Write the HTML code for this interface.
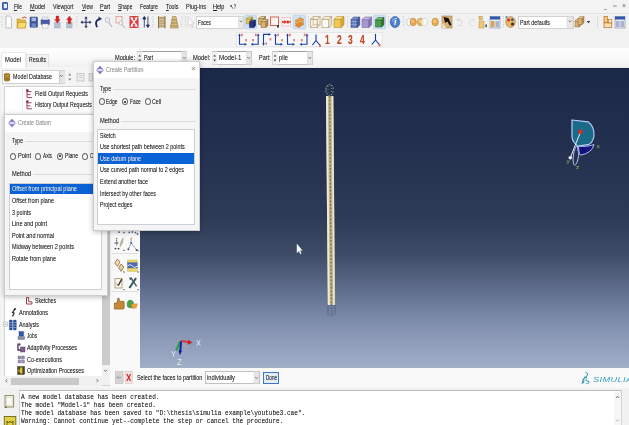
<!DOCTYPE html>
<html><head><meta charset="utf-8"><title>Abaqus/CAE</title>
<style>
*{box-sizing:border-box;margin:0;padding:0}
html,body{width:629px;height:425px;overflow:hidden;background:#f0f0f0;font-family:"Liberation Sans",sans-serif;font-size:6.9px;color:#2a2a2a}
.a{position:absolute}
.t{position:absolute;white-space:nowrap;line-height:8px;font-size:6.9px;transform-origin:0 50%;text-shadow:0 0 0.6px rgba(0,0,0,.35)}
.m{position:absolute;white-space:pre;font-family:"Liberation Mono",monospace;font-size:7.3px;line-height:8px;color:#2a2a2a;text-shadow:0 0 0.6px rgba(0,0,0,.4);transform:scaleX(0.832);transform-origin:0 50%}
.r{position:absolute;width:6px;height:7px;border:0.6px solid #6a6a6a;border-radius:50%;background:#fff}
.r.on::after{content:"";position:absolute;left:1.3px;top:1.6px;width:2px;height:2.4px;border-radius:50%;background:#222}
svg{position:absolute;overflow:visible}

</style></head><body>
<div class="a" style="left:0px;top:0px;width:629px;height:13px;background:#f3f3f3"></div>
<div class="a" style="left:0px;top:13px;width:629px;height:18px;background:#f1f1f1;border-top:1px solid #e2e2e2"></div>
<div class="a" style="left:0px;top:31px;width:629px;height:16.5px;background:#f2f2f2"></div>
<div class="a" style="left:0px;top:47.5px;width:629px;height:20.5px;background:linear-gradient(#fefefe,#fbfbfb 40%,#f1f1f1 92%,#e8e6f0)"></div>
<div class="a" style="left:236px;top:32px;width:147px;height:15px;background:#f7f7f7;border:1px solid #e6e6e6"></div>
<div class="a" style="left:0px;top:67px;width:110px;height:321px;background:#f4f4f4"></div>
<div class="a" style="left:110px;top:67px;width:30px;height:301px;background:#f9f9f9"></div>
<div class="a" style="left:140px;top:68px;width:489px;height:299.5px;background:linear-gradient(#161d38 0,#1b2949 1.5px,#232f4e 25%,#2d3b56 50%,#3d4b67 61.8%,#5f6d8c 73.8%,#8190ae 85.5%,#9aa8c4 97.2%,#a0b0c4 100%)"></div>
<div class="a" style="left:110px;top:367.5px;width:519px;height:20px;background:#f9f9f9"></div>
<div class="a" style="left:0px;top:387.5px;width:629px;height:38px;background:#f1f1f1"></div>
<div class="a" style="left:19px;top:390px;width:602.5px;height:36px;background:#fff;border:1px solid #d4d4d4;border-top-color:#bcbcbc"></div>
<div class="a" style="left:2px;top:2px;width:6px;height:8px;background:#5a78c8;border:1px solid #3858a8;border-radius:1px"></div>
<div class="a" style="left:3.5px;top:4px;width:3px;height:3.5px;background:#e8eefc"></div>
<div class="t" style="left:14.0px;top:2.8px;color:#262626;transform:scaleX(0.719);"><u>F</u>ile</div>
<div class="t" style="left:29.9px;top:2.8px;color:#262626;transform:scaleX(0.815);"><u>M</u>odel</div>
<div class="t" style="left:53.4px;top:2.8px;color:#262626;transform:scaleX(0.764);">View<u>p</u>ort</div>
<div class="t" style="left:82.0px;top:2.8px;color:#262626;transform:scaleX(0.742);"><u>V</u>iew</div>
<div class="t" style="left:100.0px;top:2.8px;color:#262626;transform:scaleX(0.790);"><u>P</u>art</div>
<div class="t" style="left:117.6px;top:2.8px;color:#262626;transform:scaleX(0.722);"><u>S</u>hape</div>
<div class="t" style="left:140.0px;top:2.8px;color:#262626;transform:scaleX(0.757);">Feat<u>u</u>re</div>
<div class="t" style="left:165.6px;top:2.8px;color:#262626;transform:scaleX(0.770);"><u>T</u>ools</div>
<div class="t" style="left:185.6px;top:2.8px;color:#262626;transform:scaleX(0.803);">Plu<u>g</u>-ins</div>
<div class="t" style="left:213.0px;top:2.8px;color:#262626;transform:scaleX(0.804);"><u>H</u>elp</div>
<div class="t" style="left:230.0px;top:2.8px;color:#222;transform:scaleX(0.610);">↖?</div>
<div class="t" style="left:603.5px;top:1.8px;color:#8a8a8a;transform:scaleX(0.780);">_</div>
<div class="t" style="left:612.5px;top:2.3px;color:#8a8a8a;transform:scaleX(1.631);">▫</div>
<div class="t" style="left:622.0px;top:2.3px;color:#8a8a8a;">×</div>
<div class="a" style="left:1px;top:52px;width:24.5px;height:16px;background:#fff;border:1px solid #e8e8e8;border-bottom:none"></div>
<div class="a" style="left:25.5px;top:54px;width:23px;height:13px;background:#f2f2f2;border:1px solid #e2e2e2;border-bottom:none"></div>
<div class="t" style="left:5.0px;top:56.3px;color:#262626;transform:scaleX(0.852);">Model</div>
<div class="t" style="left:29.0px;top:56.4px;color:#262626;transform:scaleX(0.740);">Results</div>
<div class="a" style="left:2px;top:70px;width:63px;height:13.5px;background:#fff;border:1px solid #d2d2d2"></div>
<div class="a" style="left:58.5px;top:71px;width:6px;height:11.5px;background:#e4e4e4;border-left:1px solid #c8c8c8"></div>
<div class="t" style="left:13.0px;top:73.3px;color:#262626;transform:scaleX(0.777);">Model Database</div>
<div class="a" style="left:3.5px;top:86px;width:106.5px;height:300px;background:#fff;border:1px solid #d4d4d4"></div>
<div class="a" style="left:101.5px;top:86.5px;width:8px;height:298.5px;background:#f1f1f1"></div>
<div class="a" style="left:102px;top:93px;width:7.5px;height:272px;background:#cbcbcb"></div>
<div class="a" style="left:4px;top:375.5px;width:97.5px;height:10px;background:#f1f1f1"></div>
<div class="a" style="left:11.3px;top:377.5px;width:68px;height:7px;background:#c9c9c9"></div>
<div class="t" style="left:35.0px;top:89.8px;color:#262626;transform:scaleX(0.773);">Field Output Requests</div>
<div class="t" style="left:35.0px;top:100.9px;color:#262626;transform:scaleX(0.759);">History Output Requests</div>
<div class="t" style="left:35.0px;top:296.8px;color:#262626;transform:scaleX(0.741);">Sketches</div>
<div class="t" style="left:19.0px;top:308.8px;color:#262626;transform:scaleX(0.797);">Annotations</div>
<div class="t" style="left:19.0px;top:320.8px;color:#262626;transform:scaleX(0.779);">Analysis</div>
<div class="t" style="left:27.0px;top:332.3px;color:#262626;transform:scaleX(0.687);">Jobs</div>
<div class="t" style="left:27.0px;top:343.8px;color:#262626;transform:scaleX(0.782);">Adaptivity Processes</div>
<div class="t" style="left:27.0px;top:355.8px;color:#262626;transform:scaleX(0.795);">Co-executions</div>
<div class="t" style="left:27.0px;top:366.8px;color:#262626;transform:scaleX(0.787);">Optimization Processes</div>
<div class="t" style="left:115.0px;top:53.8px;color:#262626;transform:scaleX(0.816);">Module:</div>
<div class="a" style="left:136.7px;top:50.8px;width:50.6px;height:14px;background:#fff;border:1px solid #c4c4c4;border-top-color:#a0a0a0"></div>
<div class="t" style="left:144.3px;top:54.0px;color:#262626;transform:scaleX(0.712);">Part</div>
<div class="t" style="left:192.7px;top:53.8px;color:#262626;transform:scaleX(0.836);">Model:</div>
<div class="a" style="left:211.7px;top:50.8px;width:40px;height:14px;background:#fff;border:1px solid #c4c4c4;border-top-color:#a0a0a0"></div>
<div class="t" style="left:219.3px;top:54.0px;color:#262626;transform:scaleX(0.899);">Model-1</div>
<div class="t" style="left:259.0px;top:53.8px;color:#262626;transform:scaleX(0.790);">Part:</div>
<div class="a" style="left:272px;top:50.8px;width:40.8px;height:14px;background:#fff;border:1px solid #c4c4c4;border-top-color:#a0a0a0"></div>
<div class="t" style="left:278.8px;top:54.0px;color:#262626;transform:scaleX(0.829);">pile</div>
<div class="a" style="left:196px;top:15.5px;width:48px;height:13.5px;background:#fff;border:1px solid #d2d2d2"></div>
<div class="t" style="left:198.0px;top:18.6px;color:#262626;transform:scaleX(0.693);">Faces</div>
<div class="a" style="left:517.5px;top:15.5px;width:56px;height:13.5px;background:#fff;border:1px solid #d2d2d2"></div>
<div class="t" style="left:520.0px;top:18.6px;color:#262626;transform:scaleX(0.775);">Part defaults</div>
<div class="t" style="left:136.6px;top:374.0px;color:#262626;transform:scaleX(0.786);">Select the faces to partition</div>
<div class="a" style="left:205px;top:371px;width:54.5px;height:13px;background:#fff;border:1px solid #c0c0c0"></div>
<div class="t" style="left:207.0px;top:374.0px;color:#262626;transform:scaleX(0.830);">individually</div>
<div class="a" style="left:263px;top:372px;width:16px;height:12px;background:#e4ecf8;border:1px solid #3a78d0"></div>
<div class="t" style="left:265.5px;top:374.1px;color:#202040;transform:scaleX(0.667);">Done</div>
<div class="m" style="left:21px;top:392.8px">A new model database has been created.</div>
<div class="m" style="left:21px;top:400.7px">The model "Model-1" has been created.</div>
<div class="m" style="left:21px;top:408.6px">The model database has been saved to "D:\thesis\simulia example\youtube3.cae".</div>
<div class="m" style="left:21px;top:416.5px">Warning: Cannot continue yet--complete the step or cancel the procedure.</div>
<svg width="629" height="425" viewBox="0 0 629 425" style="left:0;top:0"><rect x="1.5" y="16" width="0.8" height="1" fill="#c4c4c4" stroke="none" stroke-width="0.6" rx="0" opacity="1"/><rect x="1.5" y="18" width="0.8" height="1" fill="#c4c4c4" stroke="none" stroke-width="0.6" rx="0" opacity="1"/><rect x="1.5" y="20" width="0.8" height="1" fill="#c4c4c4" stroke="none" stroke-width="0.6" rx="0" opacity="1"/><rect x="1.5" y="22" width="0.8" height="1" fill="#c4c4c4" stroke="none" stroke-width="0.6" rx="0" opacity="1"/><rect x="1.5" y="24" width="0.8" height="1" fill="#c4c4c4" stroke="none" stroke-width="0.6" rx="0" opacity="1"/><rect x="1.5" y="26" width="0.8" height="1" fill="#c4c4c4" stroke="none" stroke-width="0.6" rx="0" opacity="1"/><path d="M6,16 h3.5 l2,2 v10 h-5.5 z" fill="#fdfdfd" stroke="#9a9a9a" stroke-width="0.6" opacity="1" /><path d="M17,19 h3 l1,1 h4.5 v8 h-8.5 z" fill="#e8b838" stroke="#b08820" stroke-width="0.5" opacity="1" /><path d="M17,28 l1.5,-5.5 h8 l-1.5,5.5 z" fill="#f8dc70" stroke="#b08820" stroke-width="0.5" opacity="1" /><path d="M22,18.5 q2.5,-3 4.5,-0.5" fill="none" stroke="#e04010" stroke-width="1" opacity="1" /><rect x="30" y="17" width="7.5" height="10.3" fill="#3c5498" stroke="#2a3c78" stroke-width="0.5" rx="0.6" opacity="1"/><rect x="31.5" y="17.6" width="4.5" height="3.6" fill="#a8b8dc" stroke="none" stroke-width="0.6" rx="0" opacity="1"/><rect x="31.5" y="23.4" width="4.5" height="3.6" fill="#7088c0" stroke="none" stroke-width="0.6" rx="0" opacity="1"/><rect x="41" y="19.6" width="8.5" height="5" fill="#4c5ca4" stroke="#3c4c8c" stroke-width="0.5" rx="0.6" opacity="1"/><rect x="42.5" y="17" width="5.5" height="2.8" fill="#ececf0" stroke="#a0a8b8" stroke-width="0.4" rx="0" opacity="1"/><rect x="42.5" y="24" width="5.5" height="4" fill="#f8f8fc" stroke="#9098b0" stroke-width="0.4" rx="0" opacity="1"/><rect x="54.5" y="22.5" width="5.6" height="5.5" fill="#b4c0d0" stroke="#94a4b8" stroke-width="0.4" rx="0" opacity="1"/><path d="M56,16 h2.8 v3.6 h1.4 l-2.8,3.6 l-2.8,-3.6 h1.4 z" fill="#d42828" stroke="#a81818" stroke-width="0.3" opacity="1" /><rect x="66.5" y="22.5" width="5.6" height="5.5" fill="#b4c0d0" stroke="#94a4b8" stroke-width="0.4" rx="0" opacity="1"/><path d="M68,23.6 h2.8 v-3.8 h1.4 l-2.8,-3.8 l-2.8,3.8 h1.4 z" fill="#d42828" stroke="#a81818" stroke-width="0.3" opacity="1" /><rect x="76.5" y="16" width="0.8" height="1" fill="#c4c4c4" stroke="none" stroke-width="0.6" rx="0" opacity="1"/><rect x="76.5" y="18" width="0.8" height="1" fill="#c4c4c4" stroke="none" stroke-width="0.6" rx="0" opacity="1"/><rect x="76.5" y="20" width="0.8" height="1" fill="#c4c4c4" stroke="none" stroke-width="0.6" rx="0" opacity="1"/><rect x="76.5" y="22" width="0.8" height="1" fill="#c4c4c4" stroke="none" stroke-width="0.6" rx="0" opacity="1"/><rect x="76.5" y="24" width="0.8" height="1" fill="#c4c4c4" stroke="none" stroke-width="0.6" rx="0" opacity="1"/><rect x="76.5" y="26" width="0.8" height="1" fill="#c4c4c4" stroke="none" stroke-width="0.6" rx="0" opacity="1"/><path d="M86,17.5 v9.4 M81.6,22.2 h8.8" fill="none" stroke="#283468" stroke-width="1.1" opacity="1" /><path d="M86,16.2 l1.7,2.2 h-3.4 z M86,28.2 l1.7,-2.2 h-3.4 z M80.4,22.2 l2.2,-1.7 v3.4 z M91.6,22.2 l-2.2,-1.7 v3.4 z" fill="#283468" stroke="none" stroke-width="0.8" opacity="1" /><path d="M97,27.2 q-3,-6.5 2.6,-8" fill="none" stroke="#1c2860" stroke-width="1.9" opacity="1" /><path d="M98.6,16.6 l3.4,2.4 l-3.6,1.8 z" fill="#1c2860" stroke="none" stroke-width="0.8" opacity="1" /><ellipse cx="107.5" cy="20" rx="2.3" ry="2.6" fill="#ececf0" stroke="#b4b4bc" stroke-width="0.8" opacity="1"/><path d="M109,22.5 l3,4.5" fill="none" stroke="#b8b8bc" stroke-width="1.3" opacity="1" /><rect x="116" y="16.5" width="6" height="6.5" fill="#fbeeee" stroke="#e08880" stroke-width="0.7" rx="0" opacity="1"/><ellipse cx="121" cy="23" rx="1.9" ry="2.2" fill="#f0f0f0" stroke="#b8b0b0" stroke-width="0.7" opacity="1"/><path d="M122.3,25 l2.5,3" fill="none" stroke="#b8b0b0" stroke-width="1.1" opacity="1" /><rect x="129.5" y="16" width="9" height="12" fill="#dc3c3c" stroke="none" stroke-width="0" rx="0.5" opacity="1"/><path d="M130.3,16.8 l3.3,1.2 l-2.1,2.6 z M137.7,16.8 l-3.3,1.2 l2.1,2.6 z M130.3,27.2 l3.3,-1.2 l-2.1,-2.6 z M137.7,27.2 l-3.3,-1.2 l2.1,-2.6 z" fill="#fff" stroke="none" stroke-width="0.8" opacity="1" /><path d="M131.5,18.5 l5,7 M136.5,18.5 l-5,7" fill="none" stroke="#fbe4e4" stroke-width="1.3" opacity="1" /><path d="M144.3,27.5 v-9 M144.3,16.4 l-1.5,2.6 h3 z" fill="#1c2860" stroke="#1c2860" stroke-width="0.8" opacity="1" /><path d="M147.9,16.5 v9 M147.9,27.6 l-1.5,-2.6 h3 z" fill="#1c2860" stroke="#1c2860" stroke-width="0.8" opacity="1" /><rect x="152.5" y="16" width="0.8" height="1" fill="#c4c4c4" stroke="none" stroke-width="0.6" rx="0" opacity="1"/><rect x="152.5" y="18" width="0.8" height="1" fill="#c4c4c4" stroke="none" stroke-width="0.6" rx="0" opacity="1"/><rect x="152.5" y="20" width="0.8" height="1" fill="#c4c4c4" stroke="none" stroke-width="0.6" rx="0" opacity="1"/><rect x="152.5" y="22" width="0.8" height="1" fill="#c4c4c4" stroke="none" stroke-width="0.6" rx="0" opacity="1"/><rect x="152.5" y="24" width="0.8" height="1" fill="#c4c4c4" stroke="none" stroke-width="0.6" rx="0" opacity="1"/><rect x="152.5" y="26" width="0.8" height="1" fill="#c4c4c4" stroke="none" stroke-width="0.6" rx="0" opacity="1"/><rect x="158.5" y="17" width="6.5" height="1.7" fill="#c8a868" stroke="#8c7038" stroke-width="0.3" rx="0" opacity="1"/><rect x="158.5" y="19.8" width="6.5" height="1.7" fill="#c8a868" stroke="#8c7038" stroke-width="0.3" rx="0" opacity="1"/><rect x="158.5" y="22.6" width="6.5" height="1.7" fill="#c8a868" stroke="#8c7038" stroke-width="0.3" rx="0" opacity="1"/><rect x="158.5" y="25.4" width="6.5" height="1.7" fill="#c8a868" stroke="#8c7038" stroke-width="0.3" rx="0" opacity="1"/><path d="M158.5,16 v12.5 M165,16 v12.5" fill="none" stroke="#6c5828" stroke-width="0.7" opacity="1" /><path d="M172.5,16.5 h3.5 l2.3,11.5 h-8 z" fill="#d8bc80" stroke="#8c7038" stroke-width="0.5" opacity="1" /><path d="M171.5,20 h5.5 M171,23 h6.5 M170.5,25.8 h7.5" fill="none" stroke="#8c7038" stroke-width="0.6" opacity="1" /><rect x="181.5" y="16" width="0.8" height="1" fill="#c4c4c4" stroke="none" stroke-width="0.6" rx="0" opacity="1"/><rect x="181.5" y="18" width="0.8" height="1" fill="#c4c4c4" stroke="none" stroke-width="0.6" rx="0" opacity="1"/><rect x="181.5" y="20" width="0.8" height="1" fill="#c4c4c4" stroke="none" stroke-width="0.6" rx="0" opacity="1"/><rect x="181.5" y="22" width="0.8" height="1" fill="#c4c4c4" stroke="none" stroke-width="0.6" rx="0" opacity="1"/><rect x="181.5" y="24" width="0.8" height="1" fill="#c4c4c4" stroke="none" stroke-width="0.6" rx="0" opacity="1"/><rect x="181.5" y="26" width="0.8" height="1" fill="#c4c4c4" stroke="none" stroke-width="0.6" rx="0" opacity="1"/><path d="M188,16.5 v10 l2.2,-2.2 l1.6,3.5 l1.2,-0.6 l-1.6,-3.3 h2.8 z" fill="#fafafa" stroke="#b8b8b8" stroke-width="0.5" opacity="1" /><rect x="185" y="16" width="0.8" height="1" fill="#c4c4c4" stroke="none" stroke-width="0.6" rx="0" opacity="1"/><rect x="185" y="18" width="0.8" height="1" fill="#c4c4c4" stroke="none" stroke-width="0.6" rx="0" opacity="1"/><rect x="185" y="20" width="0.8" height="1" fill="#c4c4c4" stroke="none" stroke-width="0.6" rx="0" opacity="1"/><rect x="185" y="22" width="0.8" height="1" fill="#c4c4c4" stroke="none" stroke-width="0.6" rx="0" opacity="1"/><rect x="185" y="24" width="0.8" height="1" fill="#c4c4c4" stroke="none" stroke-width="0.6" rx="0" opacity="1"/><rect x="185" y="26" width="0.8" height="1" fill="#c4c4c4" stroke="none" stroke-width="0.6" rx="0" opacity="1"/><rect x="238.5" y="16.2" width="5" height="12.2" fill="#e8e8e8" stroke="#c8c8c8" stroke-width="0.4" rx="0" opacity="1"/><path d="M239.7,20.5 l1.3,1.6 l1.3,-1.6" fill="none" stroke="#666" stroke-width="0.7" opacity="1" /><rect x="244.8" y="15.2" width="11.8" height="13.6" fill="#cfe0f4" stroke="#a8c4e4" stroke-width="0.5" rx="0.8" opacity="1"/><path d="M246.5,18.75 h4.32 v5.25 h-4.32 z" fill="#e8c840" stroke="#907818" stroke-width="0.5" opacity="1" /><path d="M246.5,18.75 l1.6800000000000002,-1.75 h4.32 l-1.6800000000000002,1.75 z" fill="#f4e080" stroke="#907818" stroke-width="0.5" opacity="1" /><path d="M250.82,18.75 l1.6800000000000002,-1.75 v5.25 l-1.6800000000000002,1.75 z" fill="#c0a020" stroke="#907818" stroke-width="0.5" opacity="1" /><path d="M249.5,21.875 h4.32 v5.625 h-4.32 z" fill="#283890" stroke="#101850" stroke-width="0.5" opacity="1" /><path d="M249.5,21.875 l1.6800000000000002,-1.875 h4.32 l-1.6800000000000002,1.875 z" fill="#4858b0" stroke="#101850" stroke-width="0.5" opacity="1" /><path d="M253.82,21.875 l1.6800000000000002,-1.875 v5.625 l-1.6800000000000002,1.875 z" fill="#182468" stroke="#101850" stroke-width="0.5" opacity="1" /><path d="M258.5,18.5 h5.04 v6.0 h-5.04 z" fill="#d8b070" stroke="#806028" stroke-width="0.5" opacity="1" /><path d="M258.5,18.5 l1.9600000000000002,-2.0 h5.04 l-1.9600000000000002,2.0 z" fill="#ecd098" stroke="#806028" stroke-width="0.5" opacity="1" /><path d="M263.54,18.5 l1.9600000000000002,-2.0 v6.0 l-1.9600000000000002,2.0 z" fill="#b89050" stroke="#806028" stroke-width="0.5" opacity="1" /><path d="M261,21.5 h5.04 v6.0 h-5.04 z" fill="#d8b070" stroke="#806028" stroke-width="0.5" opacity="1" /><path d="M261,21.5 l1.9600000000000002,-2.0 h5.04 l-1.9600000000000002,2.0 z" fill="#ecd098" stroke="#806028" stroke-width="0.5" opacity="1" /><path d="M266.04,21.5 l1.9600000000000002,-2.0 v6.0 l-1.9600000000000002,2.0 z" fill="#b89050" stroke="#806028" stroke-width="0.5" opacity="1" /><rect x="270.5" y="17" width="8" height="8.5" fill="#fdf4f4" stroke="#d84030" stroke-width="0.8" rx="0" opacity="1"/><rect x="277" y="25" width="2" height="2.5" fill="#404040" stroke="none" stroke-width="0.6" rx="0" opacity="1"/><rect x="282" y="17.5" width="8.5" height="8.5" fill="#fdf6f6" stroke="#e0a098" stroke-width="0.5" rx="0" opacity="1"/><path d="M282,22 h2.5 M290.5,22 h-2.5" fill="none" stroke="#d82818" stroke-width="1.6" opacity="1" /><path d="M284.3,19.8 l2.3,2.2 l-2.3,2.2 z M288.3,19.8 l-2.3,2.2 l2.3,2.2 z" fill="#d82818" stroke="none" stroke-width="0.8" opacity="1" /><rect x="293" y="15.2" width="12.5" height="13.6" fill="#cfe0f4" stroke="#a8c4e4" stroke-width="0.5" rx="0.8" opacity="1"/><path d="M295,21 l5,-3.5 l4,2 l-5,3.5 z" fill="#f0a040" stroke="#a86010" stroke-width="0.4" opacity="1" /><path d="M295,23.2 l5,-3.5 l4,2 l-5,3.5 z" fill="#f4b860" stroke="#a86010" stroke-width="0.4" opacity="1" /><path d="M295,25.4 l5,-3.5 l4,2 l-5,3.5 z" fill="#e88828" stroke="#a86010" stroke-width="0.4" opacity="1" /><rect x="308" y="16" width="0.8" height="1" fill="#c4c4c4" stroke="none" stroke-width="0.6" rx="0" opacity="1"/><rect x="308" y="18" width="0.8" height="1" fill="#c4c4c4" stroke="none" stroke-width="0.6" rx="0" opacity="1"/><rect x="308" y="20" width="0.8" height="1" fill="#c4c4c4" stroke="none" stroke-width="0.6" rx="0" opacity="1"/><rect x="308" y="22" width="0.8" height="1" fill="#c4c4c4" stroke="none" stroke-width="0.6" rx="0" opacity="1"/><rect x="308" y="24" width="0.8" height="1" fill="#c4c4c4" stroke="none" stroke-width="0.6" rx="0" opacity="1"/><rect x="308" y="26" width="0.8" height="1" fill="#c4c4c4" stroke="none" stroke-width="0.6" rx="0" opacity="1"/><path d="M310.5,19.25 h6.84 v8.25 h-6.84 z" fill="#faf6ec" stroke="#a89060" stroke-width="0.6" opacity="1" /><path d="M310.5,19.25 l2.66,-2.75 h6.84 l-2.66,2.75 z" fill="#faf6ec" stroke="#a89060" stroke-width="0.6" opacity="1" /><path d="M317.34,19.25 l2.66,-2.75 v8.25 l-2.66,2.75 z" fill="#faf6ec" stroke="#a89060" stroke-width="0.6" opacity="1" /><path d="M313.2,16.5 v8.3 h6.8 M313.2,24.8 l-2.7,2.7" fill="none" stroke="#a89060" stroke-width="0.5" opacity="1" /><path d="M322,19.25 h6.911999999999999 v8.25 h-6.911999999999999 z" fill="#fcfaf4" stroke="#a89060" stroke-width="0.6" opacity="1" /><path d="M322,19.25 l2.688,-2.75 h6.911999999999999 l-2.688,2.75 z" fill="#f8f2e4" stroke="#a89060" stroke-width="0.6" opacity="1" /><path d="M328.91200000000003,19.25 l2.688,-2.75 v8.25 l-2.688,2.75 z" fill="#f0e8d4" stroke="#a89060" stroke-width="0.6" opacity="1" /><path d="M334,19.25 h7.199999999999999 v8.25 h-7.199999999999999 z" fill="#f0c850" stroke="#a88020" stroke-width="0.5" opacity="1" /><path d="M334,19.25 l2.8000000000000003,-2.75 h7.199999999999999 l-2.8000000000000003,2.75 z" fill="#f8e088" stroke="#a88020" stroke-width="0.5" opacity="1" /><path d="M341.2,19.25 l2.8000000000000003,-2.75 v8.25 l-2.8000000000000003,2.75 z" fill="#d8a830" stroke="#a88020" stroke-width="0.5" opacity="1" /><rect x="347" y="16" width="0.8" height="1" fill="#c4c4c4" stroke="none" stroke-width="0.6" rx="0" opacity="1"/><rect x="347" y="18" width="0.8" height="1" fill="#c4c4c4" stroke="none" stroke-width="0.6" rx="0" opacity="1"/><rect x="347" y="20" width="0.8" height="1" fill="#c4c4c4" stroke="none" stroke-width="0.6" rx="0" opacity="1"/><rect x="347" y="22" width="0.8" height="1" fill="#c4c4c4" stroke="none" stroke-width="0.6" rx="0" opacity="1"/><rect x="347" y="24" width="0.8" height="1" fill="#c4c4c4" stroke="none" stroke-width="0.6" rx="0" opacity="1"/><rect x="347" y="26" width="0.8" height="1" fill="#c4c4c4" stroke="none" stroke-width="0.6" rx="0" opacity="1"/><path d="M351,19.625 h6.336 v7.875 h-6.336 z" fill="#5870b8" stroke="#283c80" stroke-width="0.5" opacity="1" /><path d="M351,19.625 l2.4640000000000004,-2.625 h6.336 l-2.4640000000000004,2.625 z" fill="#7890d0" stroke="#283c80" stroke-width="0.5" opacity="1" /><path d="M357.336,19.625 l2.4640000000000004,-2.625 v7.875 l-2.4640000000000004,2.625 z" fill="#4058a0" stroke="#283c80" stroke-width="0.5" opacity="1" /><path d="M351,21.5 h6.3 M351,24.5 h6.3 M353.2,19.6 v7.9 M355.3,19.6 v7.9" fill="none" stroke="#c0ccec" stroke-width="0.4" opacity="1" /><path d="M362,19.625 h6.911999999999999 v7.875 h-6.911999999999999 z" fill="#a898d0" stroke="#685898" stroke-width="0.5" opacity="1" /><path d="M362,19.625 l2.688,-2.625 h6.911999999999999 l-2.688,2.625 z" fill="#c4b8e4" stroke="#685898" stroke-width="0.5" opacity="1" /><path d="M368.91200000000003,19.625 l2.688,-2.625 v7.875 l-2.688,2.625 z" fill="#8878b8" stroke="#685898" stroke-width="0.5" opacity="1" /><rect x="373.5" y="15.2" width="12" height="13.6" fill="#cfe0f4" stroke="#a8c4e4" stroke-width="0.5" rx="0.8" opacity="1"/><path d="M375.5,19.875 h6.119999999999999 v7.125 h-6.119999999999999 z" fill="#48a048" stroke="#205820" stroke-width="0.5" opacity="1" /><path d="M375.5,19.875 l2.3800000000000003,-2.375 h6.119999999999999 l-2.3800000000000003,2.375 z" fill="#78c070" stroke="#205820" stroke-width="0.5" opacity="1" /><path d="M381.62,19.875 l2.3800000000000003,-2.375 v7.125 l-2.3800000000000003,2.375 z" fill="#307830" stroke="#205820" stroke-width="0.5" opacity="1" /><rect x="388" y="16" width="0.8" height="1" fill="#c4c4c4" stroke="none" stroke-width="0.6" rx="0" opacity="1"/><rect x="388" y="18" width="0.8" height="1" fill="#c4c4c4" stroke="none" stroke-width="0.6" rx="0" opacity="1"/><rect x="388" y="20" width="0.8" height="1" fill="#c4c4c4" stroke="none" stroke-width="0.6" rx="0" opacity="1"/><rect x="388" y="22" width="0.8" height="1" fill="#c4c4c4" stroke="none" stroke-width="0.6" rx="0" opacity="1"/><rect x="388" y="24" width="0.8" height="1" fill="#c4c4c4" stroke="none" stroke-width="0.6" rx="0" opacity="1"/><rect x="388" y="26" width="0.8" height="1" fill="#c4c4c4" stroke="none" stroke-width="0.6" rx="0" opacity="1"/><ellipse cx="395" cy="22" rx="4.8" ry="5.6" fill="#4a80cc" stroke="#2c5cb0" stroke-width="0.6" opacity="1"/><ellipse cx="394" cy="20" rx="2.2" ry="2.2" fill="#88b0e8" stroke="none" stroke-width="0" opacity="0.6"/><rect x="403" y="16" width="0.8" height="1" fill="#c4c4c4" stroke="none" stroke-width="0.6" rx="0" opacity="1"/><rect x="403" y="18" width="0.8" height="1" fill="#c4c4c4" stroke="none" stroke-width="0.6" rx="0" opacity="1"/><rect x="403" y="20" width="0.8" height="1" fill="#c4c4c4" stroke="none" stroke-width="0.6" rx="0" opacity="1"/><rect x="403" y="22" width="0.8" height="1" fill="#c4c4c4" stroke="none" stroke-width="0.6" rx="0" opacity="1"/><rect x="403" y="24" width="0.8" height="1" fill="#c4c4c4" stroke="none" stroke-width="0.6" rx="0" opacity="1"/><rect x="403" y="26" width="0.8" height="1" fill="#c4c4c4" stroke="none" stroke-width="0.6" rx="0" opacity="1"/><ellipse cx="410" cy="22" rx="3.3" ry="3.9" fill="#fdfdfd" stroke="#a8a8a8" stroke-width="0.5" opacity="1"/><ellipse cx="413.2" cy="22" rx="3.2" ry="3.8" fill="#e8a450" stroke="#b87c30" stroke-width="0.5" opacity="1"/><ellipse cx="412.6" cy="21.2" rx="1.5" ry="1.7" fill="#f4c888" stroke="none" stroke-width="0" opacity="0.8"/><ellipse cx="420.6" cy="22" rx="3.2" ry="3.8" fill="#e4b450" stroke="#b08830" stroke-width="0.5" opacity="1"/><ellipse cx="424.2" cy="22" rx="3.3" ry="3.9" fill="#fdfdfd" stroke="#a8a8a8" stroke-width="0.5" opacity="0.8"/><ellipse cx="420" cy="21.2" rx="1.4" ry="1.6" fill="#f4d890" stroke="none" stroke-width="0" opacity="0.8"/><ellipse cx="435.2" cy="22" rx="3.3" ry="3.9" fill="#e8ac50" stroke="#b88430" stroke-width="0.5" opacity="1"/><ellipse cx="434.6" cy="21.2" rx="1.5" ry="1.7" fill="#f6d090" stroke="none" stroke-width="0" opacity="0.8"/><rect x="442" y="16" width="10" height="12" fill="#d8b478" stroke="#8c6c30" stroke-width="0.5" rx="0" opacity="1"/><path d="M442.3,23 l4,5 h-4 z" fill="#f4ead0" stroke="none" stroke-width="0.8" opacity="1" /><path d="M443.5,17 l5,1 l3,7 l-1.8,0.8 l-2.2,-4.4 l-2.3,1.5 z" fill="#181008" stroke="none" stroke-width="0.8" opacity="1" /><path d="M457,25.5 q5,1 5,-3.5 q-1,-3.2 -4.2,-2.6" fill="none" stroke="#dcdcdc" stroke-width="1.1" opacity="1" /><path d="M456,19.8 l3,-2 v4 z" fill="#dcdcdc" stroke="none" stroke-width="0.8" opacity="1" /><path d="M474.5,25.5 q-5,1 -5,-3.5 q1,-3.2 4.2,-2.6" fill="none" stroke="#e2e2e2" stroke-width="1.1" opacity="1" /><path d="M475.6,19.8 l-3,-2 v4 z" fill="#e2e2e2" stroke="none" stroke-width="0.8" opacity="1" /><rect x="479" y="16.5" width="3.2" height="3.2" fill="#e8c070" stroke="#a07828" stroke-width="0.4" rx="0" opacity="1"/><rect x="479" y="21" width="5" height="7" fill="#ecc878" stroke="#a07828" stroke-width="0.4" rx="0" opacity="1"/><rect x="485.3" y="24.5" width="1.6" height="2.6" fill="#505050" stroke="none" stroke-width="0.6" rx="0" opacity="1"/><rect x="490" y="16.5" width="10" height="11.5" fill="#e8ecf4" stroke="#6878a0" stroke-width="0.5" rx="0" opacity="1"/><rect x="490" y="16.5" width="10" height="3" fill="#3058a8" stroke="none" stroke-width="0.6" rx="0" opacity="1"/><rect x="491" y="21" width="3.5" height="6" fill="#d8a848" stroke="none" stroke-width="0.6" rx="0" opacity="1"/><rect x="495.5" y="21" width="3.5" height="6" fill="#a8b4cc" stroke="none" stroke-width="0.6" rx="0" opacity="1"/><rect x="503" y="16" width="0.8" height="1" fill="#c4c4c4" stroke="none" stroke-width="0.6" rx="0" opacity="1"/><rect x="503" y="18" width="0.8" height="1" fill="#c4c4c4" stroke="none" stroke-width="0.6" rx="0" opacity="1"/><rect x="503" y="20" width="0.8" height="1" fill="#c4c4c4" stroke="none" stroke-width="0.6" rx="0" opacity="1"/><rect x="503" y="22" width="0.8" height="1" fill="#c4c4c4" stroke="none" stroke-width="0.6" rx="0" opacity="1"/><rect x="503" y="24" width="0.8" height="1" fill="#c4c4c4" stroke="none" stroke-width="0.6" rx="0" opacity="1"/><rect x="503" y="26" width="0.8" height="1" fill="#c4c4c4" stroke="none" stroke-width="0.6" rx="0" opacity="1"/><ellipse cx="510.5" cy="22" rx="4.8" ry="5.4" fill="#e8b868" stroke="#906428" stroke-width="0.5" opacity="1"/><ellipse cx="508.6" cy="20" rx="1.5" ry="1.5" fill="#d03020" stroke="none" stroke-width="0.6" opacity="1"/><ellipse cx="512.3" cy="19.8" rx="1.3" ry="1.3" fill="#304898" stroke="none" stroke-width="0.6" opacity="1"/><ellipse cx="512.5" cy="24" rx="1.6" ry="1.6" fill="#403020" stroke="none" stroke-width="0.6" opacity="1"/><rect x="505.5" y="16" width="2" height="2.4" fill="#8090b0" stroke="none" stroke-width="0.6" rx="0" opacity="1"/><rect x="567" y="16.2" width="6" height="12.2" fill="#e8e8e8" stroke="#c8c8c8" stroke-width="0.4" rx="0" opacity="1"/><path d="M568.7,20.5 l1.3,1.6 l1.3,-1.6" fill="none" stroke="#666" stroke-width="0.7" opacity="1" /><path d="M575,21.0 h4.32 v6.0 h-4.32 z" fill="#d8b070" stroke="#806028" stroke-width="0.4" opacity="1" /><path d="M575,21.0 l1.6800000000000002,-2.0 h4.32 l-1.6800000000000002,2.0 z" fill="#ecd098" stroke="#806028" stroke-width="0.4" opacity="1" /><path d="M579.32,21.0 l1.6800000000000002,-2.0 v6.0 l-1.6800000000000002,2.0 z" fill="#b89050" stroke="#806028" stroke-width="0.4" opacity="1" /><path d="M578,18.5 h4.32 v6.0 h-4.32 z" fill="#d8b070" stroke="#806028" stroke-width="0.4" opacity="1" /><path d="M578,18.5 l1.6800000000000002,-2.0 h4.32 l-1.6800000000000002,2.0 z" fill="#ecd098" stroke="#806028" stroke-width="0.4" opacity="1" /><path d="M582.32,18.5 l1.6800000000000002,-2.0 v6.0 l-1.6800000000000002,2.0 z" fill="#b89050" stroke="#806028" stroke-width="0.4" opacity="1" /><path d="M586.8,21 h3.4 l-1.7,2.2 z" fill="#282828" stroke="none" stroke-width="0.8" opacity="1" /><rect x="597" y="16" width="0.8" height="1" fill="#c4c4c4" stroke="none" stroke-width="0.6" rx="0" opacity="1"/><rect x="597" y="18" width="0.8" height="1" fill="#c4c4c4" stroke="none" stroke-width="0.6" rx="0" opacity="1"/><rect x="597" y="20" width="0.8" height="1" fill="#c4c4c4" stroke="none" stroke-width="0.6" rx="0" opacity="1"/><rect x="597" y="22" width="0.8" height="1" fill="#c4c4c4" stroke="none" stroke-width="0.6" rx="0" opacity="1"/><rect x="597" y="24" width="0.8" height="1" fill="#c4c4c4" stroke="none" stroke-width="0.6" rx="0" opacity="1"/><rect x="597" y="26" width="0.8" height="1" fill="#c4c4c4" stroke="none" stroke-width="0.6" rx="0" opacity="1"/><rect x="604" y="16.5" width="3.4" height="6.4" fill="#f0c888" stroke="#b86c20" stroke-width="0.7" rx="0" opacity="1"/><rect x="604" y="22.9" width="7.8" height="4.8" fill="#f8deb0" stroke="#b86c20" stroke-width="0.7" rx="0" opacity="1"/><rect x="608.6" y="19.5" width="3.2" height="3.4" fill="#fbeacc" stroke="#b86c20" stroke-width="0.6" rx="0" opacity="1"/><rect x="615" y="16.5" width="10" height="11.5" fill="#e8ecf4" stroke="#6878a0" stroke-width="0.5" rx="0" opacity="1"/><rect x="615" y="16.5" width="10" height="3" fill="#3058a8" stroke="none" stroke-width="0.6" rx="0" opacity="1"/><rect x="616" y="21" width="3.5" height="6" fill="#a8b4cc" stroke="none" stroke-width="0.6" rx="0" opacity="1"/><rect x="620.5" y="21" width="3.5" height="6" fill="#a8b4cc" stroke="none" stroke-width="0.6" rx="0" opacity="1"/><path d="M239.5,35 V44.3 H245.6" fill="none" stroke="#1c3ca8" stroke-width="1.1" opacity="1" /><path d="M239.5,33.4 l-1.4,2.4 h2.8 z M247.0,44.3 l-2.4,-1.4 v2.8 z" fill="#1c3ca8" stroke="none" stroke-width="0.8" opacity="1" /><rect x="241.2" y="33.6" width="1.7" height="2.6" fill="#d85838" stroke="none" stroke-width="0.6" rx="0" opacity="0.75"/><rect x="245.2" y="39" width="1.7" height="2.4" fill="#d85838" stroke="none" stroke-width="0.6" rx="0" opacity="0.75"/><path d="M258.2,35 V44.3 H252.1" fill="none" stroke="#1c3ca8" stroke-width="1.1" opacity="1" /><path d="M258.2,33.4 l-1.4,2.4 h2.8 z M250.7,44.3 l2.4,-1.4 v2.8 z" fill="#1c3ca8" stroke="none" stroke-width="0.8" opacity="1" /><rect x="255.0" y="33.6" width="1.7" height="2.6" fill="#d85838" stroke="none" stroke-width="0.6" rx="0" opacity="0.75"/><rect x="252.2" y="39" width="1.7" height="2.4" fill="#d85838" stroke="none" stroke-width="0.6" rx="0" opacity="0.75"/><path d="M263.5,44 V34.4 H269.6" fill="none" stroke="#1c3ca8" stroke-width="1.1" opacity="1" /><path d="M263.5,45.8 l-1.4,-2.4 h2.8 z M271.0,34.4 l-2.4,-1.4 v2.8 z" fill="#1c3ca8" stroke="none" stroke-width="0.8" opacity="1" /><rect x="265.40000000000003" y="42.4" width="1.7" height="2.4" fill="#d85838" stroke="none" stroke-width="0.6" rx="0" opacity="0.75"/><rect x="269.6" y="38" width="1.7" height="2.4" fill="#d85838" stroke="none" stroke-width="0.6" rx="0" opacity="0.75"/><path d="M275.5,35 V44.3 H281.6" fill="none" stroke="#1c3ca8" stroke-width="1.1" opacity="1" /><path d="M275.5,33.4 l-1.4,2.4 h2.8 z M283.0,44.3 l-2.4,-1.4 v2.8 z" fill="#1c3ca8" stroke="none" stroke-width="0.8" opacity="1" /><rect x="277.20000000000005" y="33.6" width="1.7" height="2.6" fill="#d85838" stroke="none" stroke-width="0.6" rx="0" opacity="0.75"/><rect x="281.20000000000005" y="39" width="1.7" height="2.4" fill="#d85838" stroke="none" stroke-width="0.6" rx="0" opacity="0.75"/><path d="M287.5,35 V44.3 H293.6" fill="none" stroke="#1c3ca8" stroke-width="1.1" opacity="1" /><path d="M287.5,33.4 l-1.4,2.4 h2.8 z M295.0,44.3 l-2.4,-1.4 v2.8 z" fill="#1c3ca8" stroke="none" stroke-width="0.8" opacity="1" /><rect x="289.20000000000005" y="33.6" width="1.7" height="2.6" fill="#d85838" stroke="none" stroke-width="0.6" rx="0" opacity="0.75"/><rect x="293.20000000000005" y="39" width="1.7" height="2.4" fill="#d85838" stroke="none" stroke-width="0.6" rx="0" opacity="0.75"/><path d="M307.0,35 V44.3 H300.9" fill="none" stroke="#1c3ca8" stroke-width="1.1" opacity="1" /><path d="M307.0,33.4 l-1.4,2.4 h2.8 z M299.5,44.3 l2.4,-1.4 v2.8 z" fill="#1c3ca8" stroke="none" stroke-width="0.8" opacity="1" /><rect x="303.79999999999995" y="33.6" width="1.7" height="2.6" fill="#d85838" stroke="none" stroke-width="0.6" rx="0" opacity="0.75"/><rect x="301.0" y="39" width="1.7" height="2.4" fill="#d85838" stroke="none" stroke-width="0.6" rx="0" opacity="0.75"/><path d="M316,34.5 v6 l-3.6,4.5 M316,40.5 l3.8,4.5" fill="none" stroke="#1838a0" stroke-width="1.1" opacity="1" /><rect x="319" y="44.7" width="2" height="2" fill="#d04030" stroke="none" stroke-width="0.6" rx="0" opacity="0.8"/><path d="M375.5,34 v6 l-3.6,4.5 M375.5,40 l3.8,4.5" fill="none" stroke="#1838a0" stroke-width="1.1" opacity="1" /><rect x="378.5" y="44.2" width="2" height="2" fill="#d04030" stroke="none" stroke-width="0.6" rx="0" opacity="0.8"/><rect x="137.2" y="51.5" width="5" height="13" fill="#f0f0f0" stroke="none" stroke-width="0.6" rx="0" opacity="1"/><path d="M138.29999999999998,56.6 l1.4,-1.8 l1.4,1.8 z M138.29999999999998,59.6 l1.4,1.8 l1.4,-1.8 z" fill="#444" stroke="none" stroke-width="0.8" opacity="1" /><rect x="181.8" y="51.5" width="5" height="13" fill="#e6e6e6" stroke="#cfcfcf" stroke-width="0.4" rx="0" opacity="1"/><path d="M182.9,57 l1.4,1.7 l1.4,-1.7" fill="none" stroke="#666" stroke-width="0.7" opacity="1" /><rect x="212.2" y="51.5" width="5" height="13" fill="#f0f0f0" stroke="none" stroke-width="0.6" rx="0" opacity="1"/><path d="M213.29999999999998,56.6 l1.4,-1.8 l1.4,1.8 z M213.29999999999998,59.6 l1.4,1.8 l1.4,-1.8 z" fill="#444" stroke="none" stroke-width="0.8" opacity="1" /><rect x="246.2" y="51.5" width="5" height="13" fill="#e6e6e6" stroke="#cfcfcf" stroke-width="0.4" rx="0" opacity="1"/><path d="M247.29999999999998,57 l1.4,1.7 l1.4,-1.7" fill="none" stroke="#666" stroke-width="0.7" opacity="1" /><rect x="272.5" y="51.5" width="5" height="13" fill="#f0f0f0" stroke="none" stroke-width="0.6" rx="0" opacity="1"/><path d="M273.6,56.6 l1.4,-1.8 l1.4,1.8 z M273.6,59.6 l1.4,1.8 l1.4,-1.8 z" fill="#444" stroke="none" stroke-width="0.8" opacity="1" /><rect x="307.3" y="51.5" width="5" height="13" fill="#e6e6e6" stroke="#cfcfcf" stroke-width="0.4" rx="0" opacity="1"/><path d="M308.40000000000003,57 l1.4,1.7 l1.4,-1.7" fill="none" stroke="#666" stroke-width="0.7" opacity="1" /><rect x="254.0" y="371.5" width="5" height="12" fill="#e6e6e6" stroke="#cfcfcf" stroke-width="0.4" rx="0" opacity="1"/><path d="M255.1,377 l1.4,1.7 l1.4,-1.7" fill="none" stroke="#666" stroke-width="0.7" opacity="1" /><path d="M60,75 l1.4,1.7 l1.4,-1.7" fill="none" stroke="#666" stroke-width="0.7" opacity="1" /><ellipse cx="7" cy="74.5" rx="2.8" ry="1.2" fill="#c89838" stroke="#705010" stroke-width="0.4" opacity="1"/><rect x="4.2" y="74.5" width="5.6" height="5.5" fill="#c89838" stroke="#705010" stroke-width="0.4" rx="0" opacity="1"/><ellipse cx="7" cy="80" rx="2.8" ry="1.2" fill="#b88828" stroke="#705010" stroke-width="0.4" opacity="1"/><path d="M4.2,76.5 q2.8,1.4 5.6,0 M4.2,78.4 q2.8,1.4 5.6,0" fill="none" stroke="#604008" stroke-width="0.4" opacity="1" /><path d="M68.2,75.5 l1.6,-2.3 l1.6,2.3 z M68.2,78.5 l1.6,2.3 l1.6,-2.3 z" fill="#888" stroke="none" stroke-width="0.8" opacity="1" /><rect x="77" y="73.5" width="7" height="7.5" fill="#ececec" stroke="#b4b4b4" stroke-width="0.6" rx="0" opacity="1"/><path d="M79,75.5 h3 M79,77.5 h3" fill="none" stroke="#b4b4b4" stroke-width="0.5" opacity="1" /><rect x="89" y="73.5" width="3.6" height="7.5" fill="#e4e4e4" stroke="#b4b4b4" stroke-width="0.6" rx="0" opacity="1"/><path d="M27,89.6 v8 M27,91.6 h4.5 M27,94.6 h3.5 M27,97.6 h5" fill="none" stroke="#a02848" stroke-width="0.9" opacity="1" /><rect x="26.2" y="89.3" width="2.3" height="2.3" fill="#783050" stroke="none" stroke-width="0.6" rx="0" opacity="1"/><path d="M27,100.8 v8 M27,102.8 h4.5 M27,105.8 h3.5 M27,108.8 h5" fill="none" stroke="#a02848" stroke-width="0.9" opacity="1" /><rect x="26.2" y="100.5" width="2.3" height="2.3" fill="#783050" stroke="none" stroke-width="0.6" rx="0" opacity="1"/><path d="M22.5,87 v26" fill="none" stroke="#dcdcdc" stroke-width="0.5" opacity="1" /><path d="M26.5,297.5 v6.5 h5.5 M26.5,297.5 h2.2 v4.3 h3.3 v2.2" fill="none" stroke="#903040" stroke-width="0.9" opacity="1" /><path d="M15.5,308.5 l-3,4 l1.6,0.5 l-1.6,3.5" fill="none" stroke="#181818" stroke-width="1.1" opacity="1" /><path d="M15.8,308 l-2.6,1 l1.8,1.6 z" fill="#181818" stroke="none" stroke-width="0.8" opacity="1" /><rect x="3.4" y="322" width="4" height="4.6" fill="#fafafa" stroke="#a0a0a0" stroke-width="0.5" rx="0" opacity="1"/><path d="M4.3,324.3 h2.2" fill="none" stroke="#555" stroke-width="0.5" opacity="1" /><rect x="9.3" y="320" width="3" height="10" fill="#2850a0" stroke="#183070" stroke-width="0.3" rx="0.8" opacity="1"/><path d="M9.3,322.5 h3 M9.3,325 h3 M9.3,327.5 h3" fill="none" stroke="#c0d0f0" stroke-width="0.5" opacity="1" /><rect x="13.3" y="320" width="3" height="10" fill="#2850a0" stroke="#183070" stroke-width="0.3" rx="0.8" opacity="1"/><path d="M13.3,322.5 h3 M13.3,325 h3 M13.3,327.5 h3" fill="none" stroke="#c0d0f0" stroke-width="0.5" opacity="1" /><rect x="19" y="331.5" width="4.6" height="4.5" fill="#3858b0" stroke="#203880" stroke-width="0.4" rx="0" opacity="1"/><rect x="18" y="336.5" width="6.6" height="3" fill="#8890a8" stroke="#586078" stroke-width="0.4" rx="0" opacity="1"/><path d="M21.3,336 v1" fill="none" stroke="#586078" stroke-width="0.6" opacity="1" /><path d="M18,343.5 v6.5 h3" fill="none" stroke="#483060" stroke-width="1.3" opacity="1" /><rect x="20.5" y="347" width="4.5" height="5" fill="#806088" stroke="#483060" stroke-width="0.4" rx="0" opacity="1"/><ellipse cx="19.3" cy="344.5" rx="1.3" ry="1.3" fill="#604878" stroke="none" stroke-width="0.6" opacity="1"/><rect x="18" y="356" width="2.8" height="3" fill="#9088b0" stroke="#605880" stroke-width="0.3" rx="0" opacity="1"/><rect x="21.6" y="356" width="2.8" height="3" fill="#9088b0" stroke="#605880" stroke-width="0.3" rx="0" opacity="1"/><rect x="18" y="360" width="2.8" height="3" fill="#a098b8" stroke="#605880" stroke-width="0.3" rx="0" opacity="1"/><rect x="21.6" y="360" width="2.8" height="3" fill="#a098b8" stroke="#605880" stroke-width="0.3" rx="0" opacity="1"/><rect x="17.6" y="366.5" width="7" height="8" fill="#4c4420" stroke="#2c2810" stroke-width="0.4" rx="0" opacity="1"/><rect x="20" y="367.5" width="2.4" height="6" fill="#d8c040" stroke="none" stroke-width="0.6" rx="0" opacity="1"/><rect x="18.3" y="369.5" width="1.4" height="2.5" fill="#c8a030" stroke="none" stroke-width="0.6" rx="0" opacity="1"/><path d="M104,369.8 l1.5,1.7 l1.5,-1.7" fill="none" stroke="#555" stroke-width="0.8" opacity="1" /><path d="M7.3,379 l-1.6,1.6 l1.6,1.6" fill="none" stroke="#555" stroke-width="0.8" opacity="1" /><path d="M96.5,379 l1.6,1.6 l-1.6,1.6" fill="none" stroke="#555" stroke-width="0.8" opacity="1" /><path d="M112,253.5 h26 M112,291.5 h26" fill="none" stroke="#cdcdcd" stroke-width="0.6" opacity="1" /><path d="M116.7,238 v7.5 M114.5,243 h4.6" fill="none" stroke="#3a3a48" stroke-width="1" opacity="1" stroke-dasharray="1.4 0.8"/><ellipse cx="115.5" cy="248.6" rx="0.9" ry="0.9" fill="#3a3a48" stroke="none" stroke-width="0.6" opacity="1"/><ellipse cx="118.6" cy="248.6" rx="0.9" ry="0.9" fill="#3a3a48" stroke="none" stroke-width="0.6" opacity="1"/><ellipse cx="124" cy="250.4" rx="0.7" ry="0.7" fill="#3a3a48" stroke="none" stroke-width="0.6" opacity="1"/><ellipse cx="138" cy="250.6" rx="0.7" ry="0.7" fill="#3a3a48" stroke="none" stroke-width="0.6" opacity="1"/><path d="M120,247 q-0.5,-5 3.2,-9.5 q0.8,5.5 -3.2,9.5 z" fill="#b4c4a0" stroke="#90a480" stroke-width="0.3" opacity="1" /><path d="M131.2,239.5 v3.5 l-2.6,5.6 M131.2,243 l5,6.4" fill="none" stroke="#586088" stroke-width="0.9" opacity="1" stroke-dasharray="1.2 0.8"/><ellipse cx="131.2" cy="238.4" rx="1" ry="1" fill="#e0a890" stroke="none" stroke-width="0.6" opacity="1"/><ellipse cx="131.2" cy="243" rx="1" ry="1" fill="#4860b0" stroke="none" stroke-width="0.6" opacity="1"/><ellipse cx="128.4" cy="249.2" rx="1" ry="1" fill="#3c4878" stroke="none" stroke-width="0.6" opacity="1"/><ellipse cx="136.6" cy="250" rx="1" ry="1" fill="#3c4878" stroke="none" stroke-width="0.6" opacity="1"/><ellipse cx="124" cy="232.6" rx="0.9" ry="0.9" fill="#3c4468" stroke="none" stroke-width="0.6" opacity="0.8"/><ellipse cx="129.2" cy="232.4" rx="0.9" ry="0.9" fill="#3c4468" stroke="none" stroke-width="0.6" opacity="0.8"/><ellipse cx="132.3" cy="232" rx="0.9" ry="0.9" fill="#3c4468" stroke="none" stroke-width="0.6" opacity="0.8"/><ellipse cx="135.4" cy="232.6" rx="0.9" ry="0.9" fill="#3c4468" stroke="none" stroke-width="0.6" opacity="0.8"/><ellipse cx="137.5" cy="234" rx="0.9" ry="0.9" fill="#3c4468" stroke="none" stroke-width="0.6" opacity="0.8"/><ellipse cx="119" cy="232.2" rx="0.9" ry="0.9" fill="#3c4468" stroke="none" stroke-width="0.6" opacity="0.8"/><path d="M114.8,263 l2.6,-4 l2.6,3 l-2.6,4.4 z" fill="#f0dcb0" stroke="#8c6c38" stroke-width="0.8" opacity="1" /><path d="M118.6,268 l2.6,-4 l2.6,3 l-2.6,4.4 z" fill="#e8cc98" stroke="#8c6c38" stroke-width="0.8" opacity="1" /><rect x="127.5" y="260" width="9.8" height="2.8" fill="#e8d468" stroke="#b0a030" stroke-width="0.3" rx="0" opacity="1"/><rect x="127.5" y="262.8" width="9.8" height="5.4" fill="#4c68b8" stroke="#304890" stroke-width="0.3" rx="0" opacity="1"/><rect x="127.5" y="268.2" width="9.8" height="3.2" fill="#e8d468" stroke="#b0a030" stroke-width="0.3" rx="0" opacity="1"/><path d="M127.5,266 q2.4,-3 4.9,0 t4.9,0" fill="none" stroke="#f0f4ff" stroke-width="0.9" opacity="1" /><rect x="115" y="278.6" width="7" height="9.4" fill="#fbf8f0" stroke="#b09870" stroke-width="0.9" rx="0" opacity="1"/><path d="M117.6,285.2 l3.6,-6.4 l1.2,0.7 l-3.6,6.4 z" fill="#383838" stroke="none" stroke-width="0.8" opacity="1" /><path d="M116.6,283.5 l1.6,2.4" fill="none" stroke="#605030" stroke-width="0.7" opacity="1" /><path d="M136,278 l-6.6,10" fill="none" stroke="#3c5860" stroke-width="2.1" opacity="1" /><path d="M131,278 l5.6,8.4" fill="none" stroke="#48646c" stroke-width="1.5" opacity="1" /><ellipse cx="130.6" cy="278.6" rx="1.3" ry="1.3" fill="#48646c" stroke="none" stroke-width="0.6" opacity="1"/><ellipse cx="124" cy="289.6" rx="0.7" ry="0.7" fill="#3a3a48" stroke="none" stroke-width="0.6" opacity="1"/><ellipse cx="124" cy="272" rx="0.7" ry="0.7" fill="#3a3a48" stroke="none" stroke-width="0.6" opacity="1"/><ellipse cx="138" cy="289.6" rx="0.7" ry="0.7" fill="#3a3a48" stroke="none" stroke-width="0.6" opacity="1"/><ellipse cx="138" cy="272" rx="0.7" ry="0.7" fill="#3a3a48" stroke="none" stroke-width="0.6" opacity="1"/><path d="M114.4,303 h3 v-3.5 q0,-1.6 1.6,-1.4 l0.6,3.2 h4 q1,0.4 0.6,1.6 v5 q-0.4,1.2 -1.6,1.2 h-8.2 z" fill="#c48838" stroke="#80501c" stroke-width="0.6" opacity="1" /><path d="M127.2,303 q0.6,-3.4 4,-2.8 q2.4,0.8 2.4,3.2 l-2,4.4 q-3,0.6 -4.4,-1.6 z" fill="#4ca048" stroke="#2c7428" stroke-width="0.4" opacity="1" /><path d="M131.4,304.2 l6,-0.4 l-1.2,4.2 l-4,0.6 z" fill="#f0a438" stroke="#c07818" stroke-width="0.4" opacity="1" /><rect x="115.3" y="371.5" width="7.8" height="12" fill="#d4d4d4" stroke="#b8b8b8" stroke-width="0.5" rx="0" opacity="1"/><path d="M121.5,377.5 h-4.5 m1.8,-1.8 l-1.8,1.8 l1.8,1.8" fill="none" stroke="#a0a0a0" stroke-width="0.9" opacity="1" /><rect x="125.2" y="371.5" width="7" height="12" fill="#f4e4e4" stroke="#d8b8b8" stroke-width="0.5" rx="0" opacity="1"/><path d="M126.8,374 l3.8,7 M130.6,374 l-3.8,7" fill="none" stroke="#d82028" stroke-width="1.2" opacity="1" /><path d="M585.5,372 q3.5,1 1.5,4 q-1.6,1.6 -3,1.2 M587,377.5 q-3.5,-0.6 -4.2,3 l-0.8,3.5 M586.2,378.5 q-0.8,3 2.5,2.6 q1,2.6 -2.5,2.6 M584,378.2 l-0.4,5" fill="none" stroke="#1888a8" stroke-width="0.9" opacity="1" /><rect x="5" y="395.5" width="8.6" height="11.5" fill="#f0f0e8" stroke="#909060" stroke-width="1" rx="0" opacity="1"/><rect x="6.5" y="397.5" width="5.6" height="7.5" fill="#fafafa" stroke="#c8c8b8" stroke-width="0.4" rx="0" opacity="1"/><path d="M6,406 l-1.6,2 l3,-0.6 z" fill="#606040" stroke="none" stroke-width="0.8" opacity="1" /><rect x="4.3" y="416.5" width="11.5" height="9" fill="#e0d040" stroke="#706818" stroke-width="0.9" rx="0" opacity="1"/><path d="M7,425 v-4 l1.5,2 l1.5,-2 l1.5,2 l1.5,-2 v4" fill="none" stroke="#504808" stroke-width="0.8" opacity="1" /><rect x="614" y="391.5" width="7" height="34" fill="#f6f6f6" stroke="none" stroke-width="0.6" rx="0" opacity="1"/><path d="M616,398 l1.5,-1.8 l1.5,1.8" fill="none" stroke="#555" stroke-width="0.8" opacity="1" /><path d="M616,419.5 l1.5,1.8 l1.5,-1.8" fill="none" stroke="#aaa" stroke-width="0.8" opacity="1" /><path d="M326,96 L333.4,96 L335,305 L327.8,305 Z" fill="#bcb48e" stroke="none" stroke-width="0.8" opacity="1" /><path d="M327,96 L328.8,305" fill="none" stroke="#f0ead2" stroke-width="1.9" opacity="1" /><path d="M332.4,96 L334,305" fill="none" stroke="#ece6cc" stroke-width="1.7" opacity="1" /><path d="M329.7,96 L331.4,305" fill="none" stroke="#5c5844" stroke-width="1.2" opacity="0.75" stroke-dasharray="2 1.6"/><ellipse cx="329.6" cy="90" rx="3.8" ry="5.6" fill="none" stroke="#c8d498" stroke-width="0.9" opacity="0.8"/><ellipse cx="329.6" cy="90" rx="3.8" ry="5.6" fill="none" stroke="#1b2949" stroke-width="1.2" stroke-dasharray="1.3 1.5"/><path d="M328,86 v9 M331.2,85 v10" fill="none" stroke="#e8ecd0" stroke-width="0.7" opacity="0.7" stroke-dasharray="1 2"/><path d="M328,305 v10 M331.6,305 v11 M335,305 v10" fill="none" stroke="#243a48" stroke-width="0.8" opacity="0.7" stroke-dasharray="1.4 1.2"/><ellipse cx="331.6" cy="310.5" rx="3.6" ry="5.4" fill="none" stroke="#4c7888" stroke-width="0.8" opacity="0.6"/><ellipse cx="331.6" cy="310.5" rx="3.6" ry="5.4" fill="none" stroke="#6a7898" stroke-width="1.1" stroke-dasharray="1.3 1.6"/><path d="M296.9,243.8 v9.2 l2,-1.9 l1.4,3 l1.1,-0.5 l-1.4,-3 h2.4 z" fill="#fafcff" stroke="#c8d4e8" stroke-width="0.3" opacity="1" /><path d="M181,340.8 L190,342.3" fill="none" stroke="#e03030" stroke-width="1.8" opacity="1" /><path d="M188,339.8 l4.5,2.8 l-4.8,2.2 z" fill="#c82020" stroke="none" stroke-width="0.8" opacity="1" /><path d="M180.6,341 L176.2,350.5" fill="none" stroke="#28a040" stroke-width="2.2" opacity="1" /><path d="M181,341.5 L180.2,352" fill="none" stroke="#1020a0" stroke-width="2" opacity="1" /><path d="M178.6,350.5 l3.2,0.3 l-1.8,4.4 z" fill="#0c1890" stroke="none" stroke-width="0.8" opacity="1" /><path d="M183,344 l5,3 M183.5,345.5 l3,4" fill="none" stroke="#e0b0c0" stroke-width="0.8" opacity="0.5" /><path d="M572,120 L588,121.8 Q594.6,126.5 594,136 Q592.8,142.5 589,144.3 L578,146.2 Q572.4,142 572,137 Z" fill="#1c6a8a" stroke="#b4ccf6" stroke-width="1.2" opacity="1" /><path d="M577.5,146.3 Q588,147 594,144.5 Q592,153 580.5,155.2 Q577,151 577.5,146.3 Z" fill="#14127a" stroke="#b0c0f4" stroke-width="1" opacity="1" /><path d="M580.5,132 L574.5,147 L570.5,157.5" fill="none" stroke="#e8f0ff" stroke-width="1" opacity="1" /><ellipse cx="576" cy="155.5" rx="2.6" ry="9.8" fill="none" stroke="#b8c8f8" stroke-width="0.9" transform="rotate(8 576 155.5)"/><ellipse cx="580.5" cy="131.8" rx="2.2" ry="2.2" fill="#e02828" stroke="none" stroke-width="0.6" opacity="1"/><ellipse cx="570.3" cy="157.8" rx="1.8" ry="1.8" fill="#f0f0f8" stroke="none" stroke-width="0.6" opacity="1"/></svg>
<div class="a" style="left:4px;top:114px;width:103.6px;height:181.6px;background:#f5f5f5;border:1px solid #cdcdcd;box-shadow:0 1px 5px rgba(0,0,0,.28)"></div>
<div class="a" style="left:5px;top:115px;width:101.6px;height:17px;background:#fff"></div>
<div class="t" style="left:18.0px;top:119.4px;color:#a8a8a8;transform:scaleX(0.769);">Create Datum</div>
<div class="t" style="left:12.0px;top:136.8px;color:#262626;transform:scaleX(0.736);">Type</div>
<div class="a" style="left:25px;top:141px;width:80px;height:1px;background:#dcdcdc"></div>
<div class="r" style="left:10px;top:152.5px"></div>
<div class="r" style="left:35px;top:152.5px"></div>
<div class="r on" style="left:57px;top:152.5px"></div>
<div class="r" style="left:82px;top:152.5px"></div>
<div class="t" style="left:18.0px;top:152.2px;color:#262626;transform:scaleX(0.827);">Point</div>
<div class="t" style="left:43.0px;top:152.2px;color:#262626;transform:scaleX(0.691);">Axis</div>
<div class="t" style="left:65.0px;top:152.2px;color:#262626;transform:scaleX(0.738);">Plane</div>
<div class="t" style="left:89.5px;top:152.2px;color:#262626;transform:scaleX(0.653);">Csys</div>
<div class="t" style="left:12.0px;top:169.8px;color:#262626;transform:scaleX(0.827);">Method</div>
<div class="a" style="left:33px;top:174px;width:72px;height:1px;background:#dcdcdc"></div>
<div class="a" style="left:9px;top:183px;width:93px;height:106.5px;background:#fff;border:1px solid #ccd0d6"></div>
<div class="a" style="left:10px;top:183.7px;width:91px;height:10.6px;background:#0b62d4"></div>
<div class="t" style="left:12.0px;top:185.1px;color:#fff;transform:scaleX(0.809);">Offset from principal plane</div>
<div class="t" style="left:12.0px;top:196.8px;color:#262626;transform:scaleX(0.796);">Offset from plane</div>
<div class="t" style="left:12.0px;top:208.5px;color:#262626;transform:scaleX(0.787);">3 points</div>
<div class="t" style="left:12.0px;top:220.1px;color:#262626;transform:scaleX(0.808);">Line and point</div>
<div class="t" style="left:12.0px;top:231.8px;color:#262626;transform:scaleX(0.806);">Point and normal</div>
<div class="t" style="left:12.0px;top:243.4px;color:#262626;transform:scaleX(0.801);">Midway between 2 points</div>
<div class="t" style="left:12.0px;top:255.1px;color:#262626;transform:scaleX(0.803);">Rotate from plane</div>
<div class="a" style="left:93px;top:60.8px;width:106.5px;height:170.4px;background:#f5f5f5;border:1px solid #cdcdcd;box-shadow:0 1px 5px rgba(0,0,0,.28)"></div>
<div class="a" style="left:94px;top:61.8px;width:104.5px;height:16.2px;background:#fff"></div>
<div class="t" style="left:106.4px;top:65.8px;color:#a8a8a8;transform:scaleX(0.781);">Create Partition</div>
<div class="t" style="left:190.5px;top:65.1px;color:#999;font-size:8px;transform:scaleX(1.070);">×</div>
<div class="t" style="left:100.3px;top:84.6px;color:#262626;transform:scaleX(0.736);">Type</div>
<div class="a" style="left:113px;top:88.5px;width:83px;height:1px;background:#dcdcdc"></div>
<div class="r" style="left:98.7px;top:98.3px"></div>
<div class="r on" style="left:122px;top:98.3px"></div>
<div class="r" style="left:144.5px;top:98.3px"></div>
<div class="t" style="left:106.4px;top:98.0px;color:#262626;transform:scaleX(0.708);">Edge</div>
<div class="t" style="left:129.5px;top:98.0px;color:#262626;transform:scaleX(0.705);">Face</div>
<div class="t" style="left:152.2px;top:98.0px;color:#262626;transform:scaleX(0.766);">Cell</div>
<div class="t" style="left:100.3px;top:116.6px;color:#262626;transform:scaleX(0.831);">Method</div>
<div class="a" style="left:121px;top:121px;width:75px;height:1px;background:#dcdcdc"></div>
<div class="a" style="left:97.2px;top:129px;width:97.8px;height:96px;background:#fff;border:1px solid #ccd0d6"></div>
<div class="a" style="left:98.2px;top:153.2px;width:95.8px;height:11px;background:#0b62d4"></div>
<div class="t" style="left:100.0px;top:131.6px;color:#262626;transform:scaleX(0.745);">Sketch</div>
<div class="t" style="left:100.0px;top:143.0px;color:#262626;transform:scaleX(0.784);">Use shortest path between 2 points</div>
<div class="t" style="left:100.0px;top:154.8px;color:#fff;transform:scaleX(0.787);">Use datum plane</div>
<div class="t" style="left:100.0px;top:166.3px;color:#262626;transform:scaleX(0.783);">Use curved path normal to 2 edges</div>
<div class="t" style="left:100.0px;top:178.0px;color:#262626;transform:scaleX(0.776);">Extend another face</div>
<div class="t" style="left:100.0px;top:189.6px;color:#262626;transform:scaleX(0.782);">Intersect by other faces</div>
<div class="t" style="left:100.0px;top:201.3px;color:#262626;transform:scaleX(0.769);">Project edges</div>
<div class="t" style="left:393.7px;top:18.0px;color:#fff;font-size:8.5px;font-weight:bold;font-style:italic;transform:scaleX(1.095);">i</div>
<div class="t" style="left:324.6px;top:34.0px;color:#cc4820;font-size:12px;font-weight:bold;line-height:12px;transform:scaleX(0.703);">1</div>
<div class="t" style="left:336.6px;top:34.0px;color:#cc4820;font-size:12px;font-weight:bold;line-height:12px;transform:scaleX(0.703);">2</div>
<div class="t" style="left:348.4px;top:34.0px;color:#cc4820;font-size:12px;font-weight:bold;line-height:12px;transform:scaleX(0.703);">3</div>
<div class="t" style="left:360.0px;top:34.0px;color:#cc4820;font-size:12px;font-weight:bold;line-height:12px;transform:scaleX(0.703);">4</div>
<div class="t" style="left:196.4px;top:339.0px;color:#f4f6fa;font-size:9.5px;transform:scaleX(0.804);">X</div>
<div class="t" style="left:171.0px;top:349.8px;color:#f4f6fa;font-size:9.5px;transform:scaleX(0.788);">Y</div>
<div class="t" style="left:177.0px;top:358.0px;color:#f4f6fa;font-size:9.5px;transform:scaleX(0.826);">Z</div>
<div class="t" style="left:596.5px;top:141.8px;color:#b8c060;font-size:6px;">x</div>
<div class="t" style="left:566.5px;top:157.3px;color:#b8c060;font-size:6px;">y</div>
<div class="t" style="left:576.0px;top:162.8px;color:#b8c060;font-size:6px;">z</div>
<div class="t" style="left:593.0px;top:375.7px;color:#36a0bc;font-size:7.6px;font-style:italic;letter-spacing:0.3px;text-shadow:none;transform:scaleX(1.216);">SIMULIA</div>
<svg width="8" height="10" viewBox="-4 -5 8 10" style="left:95.8px;top:64.6px"><path d="M0,-4.2 L3.2,-0.8 H-3.2 Z" fill="#8470c8"/><path d="M0,4.2 L3.2,0.8 H-3.2 Z" fill="#8470c8"/><ellipse cx="0" cy="0" rx="3.3" ry="1.5" fill="#e8e4f8" stroke="#7c68c0" stroke-width="0.6"/></svg>
<svg width="8" height="10" viewBox="-4 -5 8 10" style="left:7.5px;top:118.2px"><path d="M0,-4.2 L3.2,-0.8 H-3.2 Z" fill="#8470c8"/><path d="M0,4.2 L3.2,0.8 H-3.2 Z" fill="#8470c8"/><ellipse cx="0" cy="0" rx="3.3" ry="1.5" fill="#e8e4f8" stroke="#7c68c0" stroke-width="0.6"/></svg>
</body></html>
